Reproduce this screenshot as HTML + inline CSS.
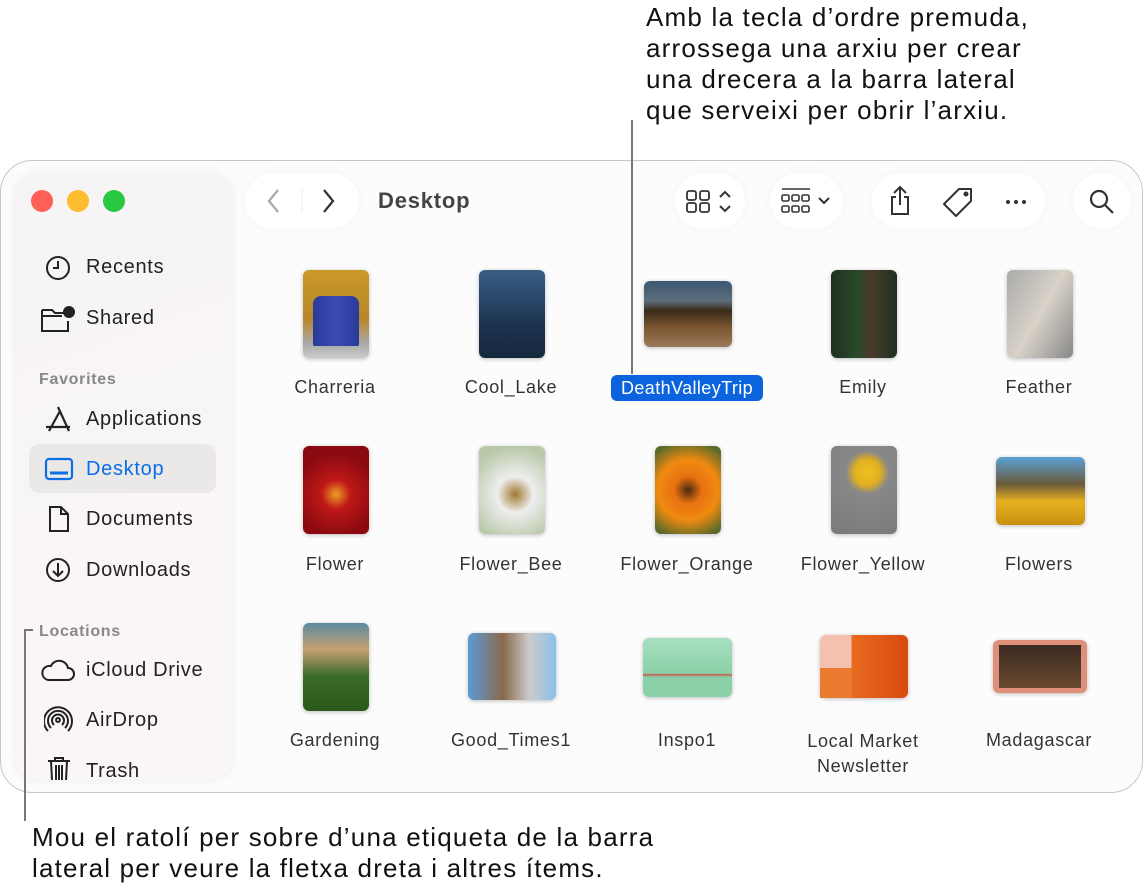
<!DOCTYPE html>
<html><head><meta charset="utf-8"><style>
*{margin:0;padding:0;box-sizing:border-box}
body{width:1144px;height:894px;background:#fff;font-family:"Liberation Sans",sans-serif;position:relative;overflow:hidden;color:#1d1d1f}
.a{position:absolute}
.cap{font-size:26px;line-height:31px;color:#111;letter-spacing:1.2px;white-space:nowrap}
.win{left:0;top:160px;width:1143px;height:633px;border:1.5px solid #c8c8c8;border-radius:32px;background:#fcfcfc}
.side{left:15px;top:173px;width:217px;height:607px;border-radius:22px;background:linear-gradient(160deg,#f6f4f4,#fbf7f6);box-shadow:0 0 8px rgba(0,0,0,.08)}
.it{font-size:20px;color:#222;letter-spacing:.7px}
.sec{font-size:16px;color:#888;font-weight:bold;letter-spacing:.7px}
.pill{background:#fff;border-radius:28px;height:56px;top:173px;box-shadow:0 0 10px rgba(0,0,0,.04)}
.lbl{font-size:18px;color:#333;text-align:center;width:176px;letter-spacing:.7px}
.th{border-radius:6px;box-shadow:0 1px 4px rgba(0,0,0,.25)}
svg{position:absolute}
</style></head><body>
<div class="a cap" style="left:646px;top:2px">Amb la tecla d’ordre premuda,<br>arrossega una arxiu per crear<br>una drecera a la barra lateral<br>que serveixi per obrir l’arxiu.</div>
<div class="a win"></div>
<div class="a side"></div>
<div class="a" style="left:31px;top:190px;width:22px;height:22px;border-radius:50%;background:#fe5f57"></div>
<div class="a" style="left:67px;top:190px;width:22px;height:22px;border-radius:50%;background:#febc2e"></div>
<div class="a" style="left:103px;top:190px;width:22px;height:22px;border-radius:50%;background:#28c840"></div>

<svg style="left:44px;top:255px" width="30" height="28" viewBox="0 0 30 28" fill="none" stroke="#222" stroke-width="2"><circle cx="14" cy="13" r="11"/><path d="M14 6v7h-5"/></svg>
<div class="a it" style="left:86px;top:256px">Recents</div>
<svg style="left:40px;top:305px" width="36" height="28" viewBox="0 0 36 28" fill="none" stroke="#222" stroke-width="2"><path d="M2 5h10l3 3h9M2 5v21h26v-10M2 11h20"/><circle cx="29" cy="7" r="5" fill="#222"/></svg>
<div class="a it" style="left:86px;top:307px">Shared</div>
<div class="a sec" style="left:39px;top:371px">Favorites</div>
<svg style="left:44px;top:405px" width="30" height="28" viewBox="0 0 30 28" fill="none" stroke="#222" stroke-width="2.2"><path d="M14 2l11 24M16 6L5 26M2 22h24"/></svg>
<div class="a it" style="left:86px;top:408px">Applications</div>
<div class="a" style="left:29px;top:444px;width:187px;height:49px;border-radius:10px;background:#ebe8e8"></div>
<svg style="left:44px;top:456px" width="30" height="26" viewBox="0 0 30 26" fill="none" stroke="#0a6ee6" stroke-width="2.2"><rect x="2" y="3" width="26" height="20" rx="3"/><path d="M6 17h18" stroke-width="3"/></svg>
<div class="a it" style="left:86px;top:458px;color:#0a6ee6">Desktop</div>
<svg style="left:46px;top:505px" width="26" height="28" viewBox="0 0 26 28" fill="none" stroke="#222" stroke-width="2"><path d="M4 2h11l7 7v17H4zM15 2v7h7"/></svg>
<div class="a it" style="left:86px;top:508px">Documents</div>
<svg style="left:44px;top:556px" width="30" height="28" viewBox="0 0 30 28" fill="none" stroke="#222" stroke-width="2"><circle cx="14" cy="14" r="11"/><path d="M14 7v13M9 15l5 5 5-5"/></svg>
<div class="a it" style="left:86px;top:559px">Downloads</div>
<div class="a sec" style="left:39px;top:623px">Locations</div>
<svg style="left:40px;top:658px" width="36" height="26" viewBox="0 0 36 26" fill="none" stroke="#222" stroke-width="2"><path d="M8 22h20a6 6 0 0 0 0-12 9 9 0 0 0-17-2 7 7 0 0 0-3 14z"/></svg>
<div class="a it" style="left:86px;top:659px">iCloud Drive</div>
<svg style="left:44px;top:706px" width="30" height="30" viewBox="0 0 30 30" fill="none" stroke="#222" stroke-width="2"><circle cx="14" cy="14" r="2"/><path d="M10 19a6 6 0 1 1 8 0M7 22a10 10 0 1 1 14 0M4 25a14 14 0 1 1 20 0"/></svg>
<div class="a it" style="left:86px;top:709px">AirDrop</div>
<svg style="left:46px;top:756px" width="26" height="24" viewBox="0 0 26 24" fill="none" stroke="#222" stroke-width="2"><path d="M2 5h22M9 5V2h8v3M5 5l1 19M21 5l-1 19M10 9v15M13 9v15M16 9v15"/></svg>
<div class="a it" style="left:86px;top:760px">Trash</div>

<div class="a" style="left:24px;top:629px;width:2px;height:192px;background:#777"></div>
<div class="a" style="left:24px;top:629px;width:9px;height:2px;background:#777"></div>
<div class="a cap" style="left:32px;top:822px">Mou el ratolí per sobre d’una etiqueta de la barra<br>lateral per veure la fletxa dreta i altres ítems.</div>
<div class="a" style="left:631px;top:120px;width:2px;height:254px;background:#777"></div>

<div class="a pill" style="left:245px;width:114px"></div>
<svg style="left:262px;top:187px" width="80" height="28" viewBox="0 0 80 28" fill="none" stroke-width="2.2"><path d="M16 3L7 14l9 11" stroke="#aaa"/><path d="M40 2v24" stroke="#eee" stroke-width="1"/><path d="M62 3l9 11-9 11" stroke="#333"/></svg>
<div class="a" style="left:378px;top:188px;font-size:22px;font-weight:bold;color:#444;letter-spacing:.8px">Desktop</div>
<div class="a pill" style="left:675px;width:70px"></div>
<svg style="left:686px;top:189px" width="52" height="26" viewBox="0 0 52 26" fill="none" stroke="#333" stroke-width="1.8"><rect x="1" y="2" width="9" height="9" rx="2"/><rect x="14" y="2" width="9" height="9" rx="2"/><rect x="1" y="14" width="9" height="9" rx="2"/><rect x="14" y="14" width="9" height="9" rx="2"/><path d="M34 8l5-5 5 5M34 17l5 5 5-5" stroke-width="2"/></svg>
<div class="a pill" style="left:770px;width:73px"></div>
<svg style="left:781px;top:187px" width="54" height="28" viewBox="0 0 54 28" fill="none" stroke="#333" stroke-width="1.6"><path d="M1 2h28"/><rect x="1" y="8" width="7" height="6" rx="1.5"/><rect x="11" y="8" width="7" height="6" rx="1.5"/><rect x="21" y="8" width="7" height="6" rx="1.5"/><rect x="1" y="19" width="7" height="6" rx="1.5"/><rect x="11" y="19" width="7" height="6" rx="1.5"/><rect x="21" y="19" width="7" height="6" rx="1.5"/><path d="M38 11l5 5 5-5" stroke-width="2"/></svg>
<div class="a pill" style="left:872px;width:173px"></div>
<svg style="left:886px;top:184px" width="150" height="34" viewBox="0 0 150 34" fill="none" stroke="#333" stroke-width="2"><path d="M14 3v18M8 9l6-6 6 6M10 13H6v17h16V13h-4"/><path d="M73 5h12v12L70 32 58 20z" stroke-linejoin="round"/><circle cx="80" cy="10" r="1.5" fill="#333"/><circle cx="122" cy="18" r="2" fill="#333" stroke="none"/><circle cx="130" cy="18" r="2" fill="#333" stroke="none"/><circle cx="138" cy="18" r="2" fill="#333" stroke="none"/></svg>
<div class="a pill" style="left:1073px;width:58px"></div>
<svg style="left:1088px;top:188px" width="28" height="28" viewBox="0 0 28 28" fill="none" stroke="#333" stroke-width="2.2"><circle cx="11" cy="11" r="8"/><path d="M17 17l8 8"/></svg>

<div class="a th" style="left:303px;top:270px;width:66px;height:88px;background:linear-gradient(#c99a2a 0,#b8862a 55%,#aaa 85%,#ccc)"><div class="a" style="left:10px;top:26px;width:46px;height:50px;background:linear-gradient(90deg,#2a3a9a,#3b4bb5,#2a3a9a);border-radius:8px 8px 2px 2px"></div></div>
<div class="a th" style="left:479px;top:270px;width:66px;height:88px;background:linear-gradient(#3a5f86,#1d3450 60%,#16283d)"></div>
<div class="a th" style="left:644px;top:281px;width:88px;height:66px;background:linear-gradient(#3b5773 0,#5d6d7a 30%,#3a2a18 45%,#7a5530 70%,#9a7a5a)"></div>
<div class="a th" style="left:831px;top:270px;width:66px;height:88px;background:linear-gradient(90deg,#1e3020,#2a4a2a 40%,#4a3a2a 60%,#1e3020)"></div>
<div class="a th" style="left:1007px;top:270px;width:66px;height:88px;background:linear-gradient(120deg,#aaa,#d8d2c8 50%,#888)"></div>
<div class="a lbl" style="left:247px;top:377px">Charreria</div>
<div class="a lbl" style="left:423px;top:377px">Cool_Lake</div>
<div class="a" style="left:611px;top:375px;width:152px;height:26px;border-radius:6px;background:#0b64de;color:#fff;font-size:18px;text-align:center;line-height:26px;letter-spacing:.4px">DeathValleyTrip</div>
<div class="a lbl" style="left:775px;top:377px">Emily</div>
<div class="a lbl" style="left:951px;top:377px">Feather</div>
<div class="a th" style="left:303px;top:446px;width:66px;height:88px;background:radial-gradient(circle at 50% 55%,#e8a020 0,#c01818 25%,#8a0a10 70%)"></div>
<div class="a th" style="left:479px;top:446px;width:66px;height:88px;background:radial-gradient(circle at 55% 55%,#a07a30 0,#eee 30%,#b8c8a8 80%)"></div>
<div class="a th" style="left:655px;top:446px;width:66px;height:88px;background:radial-gradient(circle at 50% 50%,#4a2a10 0,#e87010 25%,#f08a10 55%,#5a6a2a 90%)"></div>
<div class="a th" style="left:831px;top:446px;width:66px;height:88px;background:radial-gradient(circle at 55% 30%,#f0c020 0,#e0b020 18%,#888 30%,#7a7a7a)"></div>
<div class="a th" style="left:996px;top:457px;width:89px;height:68px;background:linear-gradient(#5aa0d8 0,#6a5a3a 40%,#e8b020 65%,#c89010)"></div>
<div class="a lbl" style="left:247px;top:554px">Flower</div>
<div class="a lbl" style="left:423px;top:554px">Flower_Bee</div>
<div class="a lbl" style="left:599px;top:554px">Flower_Orange</div>
<div class="a lbl" style="left:775px;top:554px">Flower_Yellow</div>
<div class="a lbl" style="left:951px;top:554px">Flowers</div>
<div class="a th" style="left:303px;top:623px;width:66px;height:88px;background:linear-gradient(#5a8aa0,#c8a070 30%,#3a6a2a 60%,#2a5a1a)"></div>
<div class="a th" style="left:468px;top:633px;width:88px;height:67px;background:linear-gradient(90deg,#5a9ad8,#8a6a4a 40%,#ccc 70%,#8ac0e8)"></div>
<div class="a th" style="left:643px;top:638px;width:89px;height:59px;background:linear-gradient(#a8e0c0,#8ad0a8 60%,#c85a4a 62%,#8ad0a8 66%)"></div>
<div class="a th" style="left:820px;top:635px;width:88px;height:63px;background:linear-gradient(90deg,#f4c0b0 0,#f4c0b0 36%,#e86a20 36%,#d84a10)"><div class="a" style="left:0;top:33px;width:32px;height:30px;background:#ea7a30"></div></div>
<div class="a th" style="left:993px;top:640px;width:94px;height:53px;background:#e0907a"><div class="a" style="left:6px;top:5px;width:82px;height:43px;background:linear-gradient(#3a2a20,#6a4a30)"></div></div>
<div class="a lbl" style="left:247px;top:730px">Gardening</div>
<div class="a lbl" style="left:423px;top:730px">Good_Times1</div>
<div class="a lbl" style="left:599px;top:730px">Inspo1</div>
<div class="a lbl" style="left:775px;line-height:25px;top:729px">Local Market<br>Newsletter</div>
<div class="a lbl" style="left:951px;top:730px">Madagascar</div>
</body></html>
